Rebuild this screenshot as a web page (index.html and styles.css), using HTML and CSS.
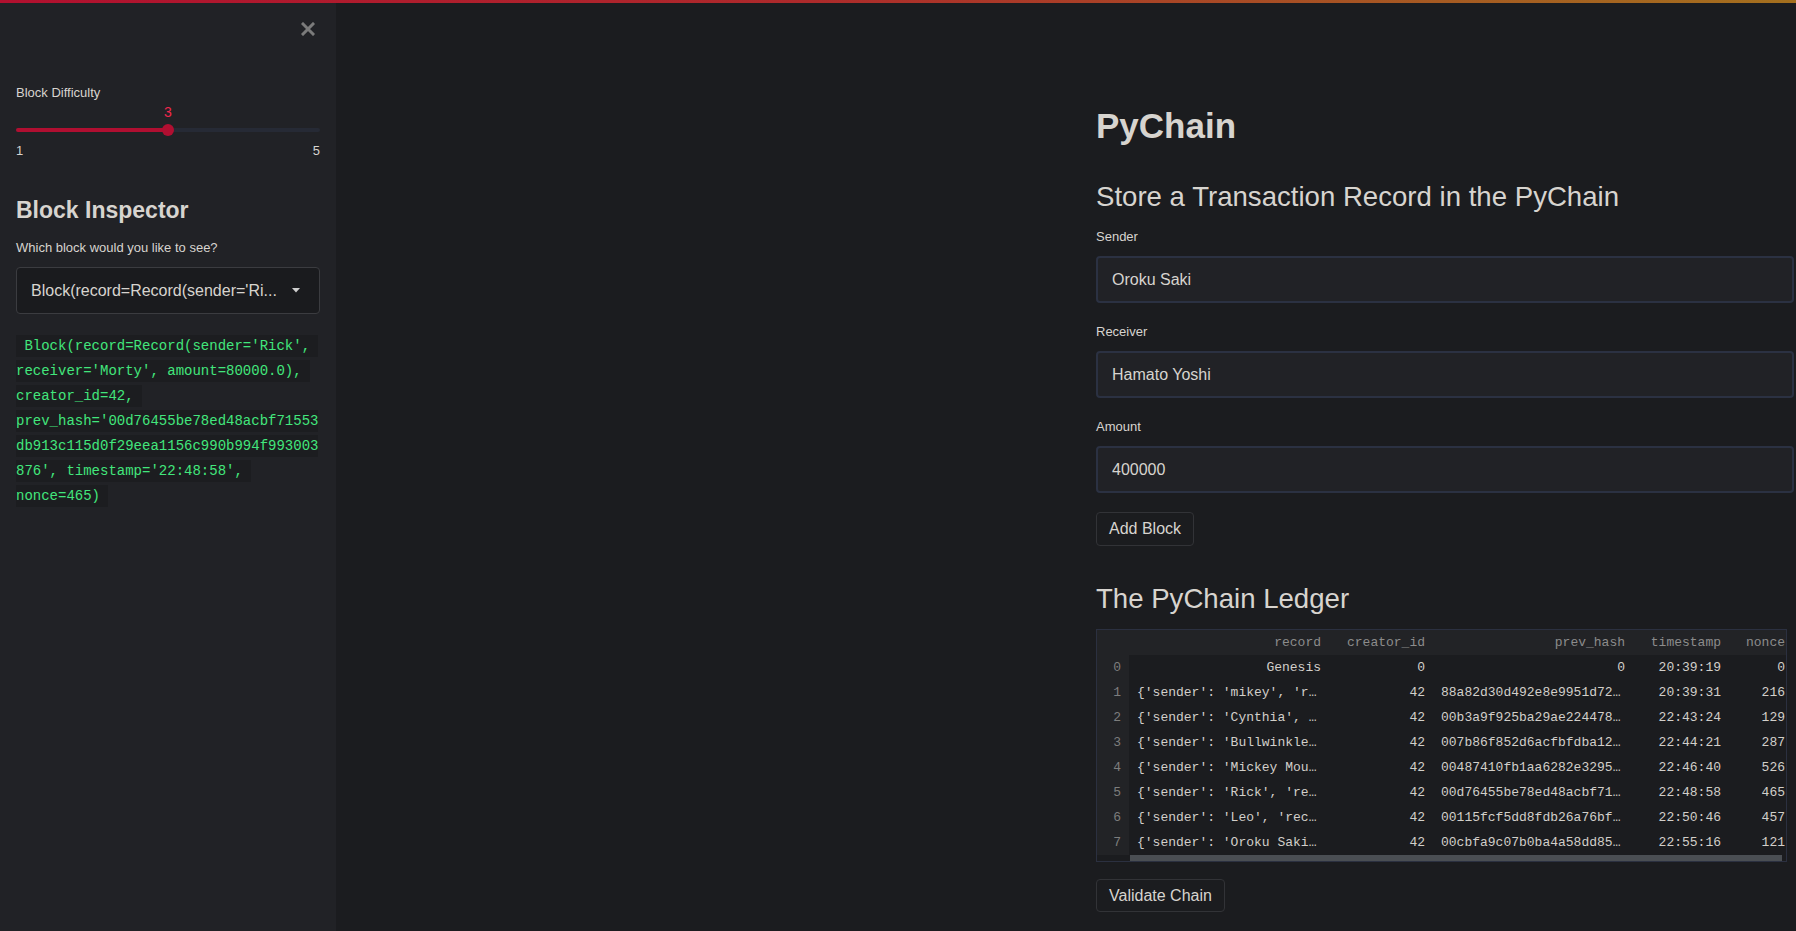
FILE: index.html
```html
<!DOCTYPE html>
<html>
<head>
<meta charset="utf-8">
<link rel="stylesheet" href="styles.css">
</head>
<body>
<div class="decoration"></div>
<div class="app">
  <aside class="sidebar">
    <div class="close-row">
      <svg class="close" width="14" height="14" viewBox="0 0 14 14"><path d="M2 2 L12 12 M12 2 L2 12" stroke="#7b7b7b" stroke-width="3" stroke-linecap="square"/></svg>
    </div>
    <div class="side-label">Block Difficulty</div>
    <div class="slider">
      <div class="slider-val-row"><span class="slider-val">3</span></div>
      <div class="track"><div class="track-fill"></div><div class="thumb"></div></div>
      <div class="ticks"><span>1</span><span>5</span></div>
    </div>
    <h3 class="side-title">Block Inspector</h3>
    <div class="side-label q">Which block would you like to see?</div>
    <div class="select">
      <span class="select-text">Block(record=Record(sender='Ri...</span>
      <svg width="8" height="5" viewBox="0 0 8 5"><path d="M0 0 L8 0 L4 4.5 Z" fill="#cfcfcf"/></svg>
    </div>
    <div class="codebox"><code> Block(record=Record(sender='Rick', receiver='Morty', amount=80000.0), creator_id=42, prev_hash='00d76455be78ed48acbf71553db913c115d0f29eea1156c990b994f993003876', timestamp='22:48:58', nonce=465) </code></div>
  </aside>
  <main class="main">
    <div class="block">
      <h1 class="title">PyChain</h1>
      <h2 class="subtitle">Store a Transaction Record in the PyChain</h2>
      <div class="field">
        <div class="label">Sender</div>
        <div class="input">Oroku Saki</div>
      </div>
      <div class="field">
        <div class="label">Receiver</div>
        <div class="input">Hamato Yoshi</div>
      </div>
      <div class="field">
        <div class="label">Amount</div>
        <div class="input">400000</div>
      </div>
      <button class="btn add">Add Block</button>
      <h2 class="subtitle ledger">The PyChain Ledger</h2>
      <div class="table-wrap">
        <div class="grid">
          <div class="row head"><div class="c idx"></div><div class="c rec">record</div><div class="c cid">creator_id</div><div class="c ph">prev_hash</div><div class="c ts">timestamp</div><div class="c nn">nonce</div></div>
          <div class="row"><div class="c idx">0</div><div class="c rec">Genesis</div><div class="c cid">0</div><div class="c ph">0</div><div class="c ts">20:39:19</div><div class="c nn">0</div></div>
          <div class="row"><div class="c idx">1</div><div class="c rec l">{'sender': 'mikey', 'r…</div><div class="c cid">42</div><div class="c ph l">88a82d30d492e8e9951d72…</div><div class="c ts">20:39:31</div><div class="c nn">216</div></div>
          <div class="row"><div class="c idx">2</div><div class="c rec l">{'sender': 'Cynthia', …</div><div class="c cid">42</div><div class="c ph l">00b3a9f925ba29ae224478…</div><div class="c ts">22:43:24</div><div class="c nn">129</div></div>
          <div class="row"><div class="c idx">3</div><div class="c rec l">{'sender': 'Bullwinkle…</div><div class="c cid">42</div><div class="c ph l">007b86f852d6acfbfdba12…</div><div class="c ts">22:44:21</div><div class="c nn">287</div></div>
          <div class="row"><div class="c idx">4</div><div class="c rec l">{'sender': 'Mickey Mou…</div><div class="c cid">42</div><div class="c ph l">00487410fb1aa6282e3295…</div><div class="c ts">22:46:40</div><div class="c nn">526</div></div>
          <div class="row"><div class="c idx">5</div><div class="c rec l">{'sender': 'Rick', 're…</div><div class="c cid">42</div><div class="c ph l">00d76455be78ed48acbf71…</div><div class="c ts">22:48:58</div><div class="c nn">465</div></div>
          <div class="row"><div class="c idx">6</div><div class="c rec l">{'sender': 'Leo', 'rec…</div><div class="c cid">42</div><div class="c ph l">00115fcf5dd8fdb26a76bf…</div><div class="c ts">22:50:46</div><div class="c nn">457</div></div>
          <div class="row"><div class="c idx">7</div><div class="c rec l">{'sender': 'Oroku Saki…</div><div class="c cid">42</div><div class="c ph l">00cbfa9c07b0ba4a58dd85…</div><div class="c ts">22:55:16</div><div class="c nn">121</div></div>
        </div>
        <div class="hscroll"><div class="hthumb"></div></div>
      </div>
      <button class="btn validate">Validate Chain</button>
    </div>
  </main>
</div>
</body>
</html>
```
FILE: styles.css
```css
* { box-sizing: border-box; }
html, body { margin: 0; padding: 0; }
body {
  background: #1b1c1f;
  color: #d7d4cf;
  font-family: "Liberation Sans", Arial, sans-serif;
  width: 1796px;
  height: 931px;
  overflow: hidden;
}
.decoration {
  position: fixed;
  top: 0; left: 0; right: 0;
  height: 3px;
  background: linear-gradient(90deg, #b1102f 0%, #ad2a2b 45%, #a65a22 80%, #a4701e 100%);
  z-index: 5;
}
.app {
  display: flex;
  height: 931px;
}
.sidebar {
  width: 336px;
  flex: none;
  background: #212226;
  padding: 22px 16px 0 16px;
}
.close-row {
  display: flex;
  justify-content: flex-end;
  padding-right: 5px;
  height: 14px;
}
.side-label {
  font-size: 13px;
  line-height: 16px;
  margin-top: 49px;
  color: #d7d4cf;
}
.slider { margin-top: 3px; }
.slider-val-row {
  position: relative;
  height: 16px;
}
.slider-val {
  position: absolute;
  left: 152px;
  top: 0;
  transform: translateX(-50%);
  font-size: 14px;
  line-height: 16px;
  color: #f0284d;
}
.track {
  position: relative;
  margin-top: 8px;
  height: 4px;
  border-radius: 2px;
  background: #262a35;
}
.track-fill {
  width: 152px;
  height: 4px;
  border-radius: 2px;
  background: #b00f31;
}
.thumb {
  position: absolute;
  left: 146px;
  top: -4px;
  width: 12px;
  height: 12px;
  border-radius: 50%;
  background: #b00f31;
}
.ticks {
  display: flex;
  justify-content: space-between;
  margin-top: 11px;
  font-size: 13px;
  line-height: 16px;
  color: #d7d4cf;
}
.side-title {
  margin: 37px 0 0 0;
  font-size: 23px;
  line-height: 28px;
  font-weight: 700;
  color: #d7d4cf;
}
.side-label.q { margin-top: 16px; }
.select {
  margin-top: 11px;
  height: 47px;
  border: 1px solid #3b3c40;
  border-radius: 4px;
  background: #1a1b1e;
  display: flex;
  align-items: center;
  justify-content: space-between;
  padding: 0 19px 0 14px;
  font-size: 16px;
  color: #d7d4cf;
}
.codebox {
  margin-top: 20px;
  font-family: "Liberation Mono", "Courier New", monospace;
  font-size: 14px;
  line-height: 25px;
  white-space: pre-wrap;
  overflow-wrap: anywhere;
}
.codebox code {
  font-family: inherit;
  color: #42e67c;
  background: #1c1d20;
  padding: 3px 0;
}
.main {
  flex: 1;
  padding-left: 760px;
  padding-top: 104px;
}
.block { width: 698px; }
.title {
  margin: 0;
  font-size: 35px;
  line-height: 43px;
  font-weight: 700;
  color: #d7d4cf;
}
.subtitle {
  margin: 33px 0 0 0;
  font-size: 27.6px;
  line-height: 34px;
  font-weight: 400;
  color: #d7d4cf;
}
.field { margin-top: 15px; }
.field + .field { margin-top: 21px; }
.label {
  font-size: 13px;
  line-height: 16px;
  color: #d7d4cf;
}
.input {
  margin-top: 11px;
  height: 47px;
  background: #212226;
  border: 2px solid #2b3142;
  border-radius: 4px;
  padding-left: 14px;
  display: flex;
  align-items: center;
  font-size: 16px;
  color: #d7d4cf;
}
.btn {
  display: block;
  font-family: "Liberation Sans", Arial, sans-serif;
  font-size: 16px;
  color: #d7d4cf;
  background: #1b1c1f;
  border: 1px solid #323337;
  border-radius: 4px;
  height: 34px;
  padding: 0 12px;
}
.btn.add { margin-top: 19px; }
.subtitle.ledger { margin-top: 36px; }
.table-wrap {
  margin-top: 13px;
  width: 691px;
  border: 1px solid #2b3040;
  overflow: hidden;
  font-family: "Liberation Mono", "Courier New", monospace;
  font-size: 13px;
}
.grid { width: 700px; }
.row {
  display: flex;
  height: 25px;
  line-height: 25px;
  color: #d2cfca;
}
.row.head { background: #222326; color: #8c8c8c; }
.c {
  flex: none;
  padding: 0 8px;
  text-align: right;
  white-space: nowrap;
  overflow: hidden;
}
.c.l { text-align: left; }
.idx { width: 32px; background: #222326; color: #7d7d7d; padding: 0 8px 0 0; }
.rec { width: 200px; }
.cid { width: 104px; }
.ph { width: 200px; }
.ts { width: 96px; }
.nn { width: 64px; }
.hscroll {
  height: 6px;
  padding-left: 33px;
  padding-right: 4px;
}
.hthumb {
  height: 6px;
  background: #4a4e53;
}
.btn.validate { margin-top: 17px; height: 33px; padding: 0 12px; }
```
